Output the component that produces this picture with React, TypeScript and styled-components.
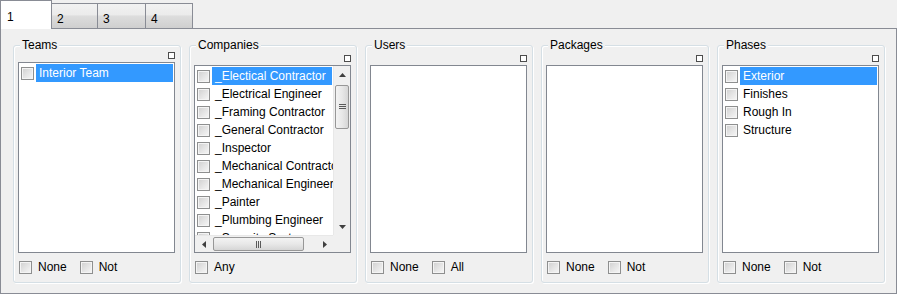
import React from 'react';
import styled, { createGlobalStyle } from 'styled-components';

const border = '#898c95';
const listBorder = '#828790';
const face = '#f0f0f0';
const select = '#3399ff';

type Item = { label: string; selected?: boolean };
type Group = {
  title: string;
  items: Item[];
  scroll?: boolean;
  lift?: number;
  options: string[];
};

const groups: Group[] = [
  {
    title: 'Teams',
    lift: 3,
    items: [{ label: 'Interior Team', selected: true }],
    options: ['None', 'Not'],
  },
  {
    title: 'Companies',
    scroll: true,
    items: [
      { label: '_Electical Contractor', selected: true },
      { label: '_Electrical Engineer' },
      { label: '_Framing Contractor' },
      { label: '_General Contractor' },
      { label: '_Inspector' },
      { label: '_Mechanical Contractor' },
      { label: '_Mechanical Engineer' },
      { label: '_Painter' },
      { label: '_Plumbing Engineer' },
      { label: '_Security Systems' },
    ],
    options: ['Any'],
  },
  { title: 'Users', items: [], options: ['None', 'All'] },
  { title: 'Packages', items: [], options: ['None', 'Not'] },
  {
    title: 'Phases',
    items: [
      { label: 'Exterior', selected: true },
      { label: 'Finishes' },
      { label: 'Rough In' },
      { label: 'Structure' },
    ],
    options: ['None', 'Not'],
  },
];

const tabs = [
  { label: '1', width: 52 },
  { label: '2', width: 47 },
  { label: '3', width: 49 },
  { label: '4', width: 48 },
];

export default function App() {
  return (
    <>
      <GlobalStyle />
      <Window>
        <TabStrip>
          {tabs.map((t, i) => (
            <Tab key={t.label} $active={i === 0} $width={t.width}>
              {t.label}
            </Tab>
          ))}
        </TabStrip>
        <Panel>
          {groups.map((g) => (
            <GroupBox key={g.title}>
              <Legend>{g.title}</Legend>
              <CornerRow $lift={g.lift ?? 0}>
                <CornerSquare />
              </CornerRow>
              <ListBox $scroll={!!g.scroll} $lift={g.lift ?? 0}>
                <Items>
                  {g.items.map((it) => (
                    <Row key={it.label}>
                      <Check />
                      <RowLabel $selected={!!it.selected}>{it.label}</RowLabel>
                    </Row>
                  ))}
                </Items>
                {g.scroll && (
                  <>
                    <VScroll>
                      <Arrow>
                        <svg width="7" height="4" viewBox="0 0 7 4">
                          <polygon points="0,4 7,4 3.5,0" fill="#404040" />
                        </svg>
                      </Arrow>
                      <VTrack>
                        <VThumb>
                          <svg width="7" height="6" viewBox="0 0 7 6">
                            <path d="M0 0.5h7M0 2.5h7M0 4.5h7" stroke="#5a5a5a" />
                          </svg>
                        </VThumb>
                      </VTrack>
                      <Arrow>
                        <svg width="7" height="4" viewBox="0 0 7 4">
                          <polygon points="0,0 7,0 3.5,4" fill="#404040" />
                        </svg>
                      </Arrow>
                    </VScroll>
                    <HScroll>
                      <Arrow>
                        <svg width="4" height="7" viewBox="0 0 4 7">
                          <polygon points="4,0 4,7 0,3.5" fill="#404040" />
                        </svg>
                      </Arrow>
                      <HTrack>
                        <HThumb>
                          <svg width="6" height="7" viewBox="0 0 6 7">
                            <path d="M0.5 0v7M2.5 0v7M4.5 0v7" stroke="#5a5a5a" />
                          </svg>
                        </HThumb>
                      </HTrack>
                      <Arrow>
                        <svg width="4" height="7" viewBox="0 0 4 7">
                          <polygon points="0,0 0,7 4,3.5" fill="#404040" />
                        </svg>
                      </Arrow>
                    </HScroll>
                    <Corner />
                  </>
                )}
              </ListBox>
              <Options>
                {g.options.map((o) => (
                  <Option key={o}>
                    <Check />
                    <span>{o}</span>
                  </Option>
                ))}
              </Options>
            </GroupBox>
          ))}
        </Panel>
      </Window>
    </>
  );
}

const GlobalStyle = createGlobalStyle`
  html, body {
    margin: 0;
    padding: 0;
    background: ${face};
  }
  body {
    font-family: "Liberation Sans", Arial, sans-serif;
    font-size: 12px;
    color: #000;
  }
`;

const Window = styled.div`
  width: 897px;
  height: 294px;
  display: flex;
  flex-direction: column;
  background: ${face};
`;

const TabStrip = styled.div`
  height: 28px;
  display: flex;
  align-items: flex-end;
  position: relative;
  z-index: 1;
`;

const Tab = styled.div<{ $active: boolean; $width: number }>`
  box-sizing: border-box;
  width: ${(p) => p.$width}px;
  height: ${(p) => (p.$active ? 29 : 25)}px;
  margin-left: -1px;
  margin-bottom: ${(p) => (p.$active ? -1 : 0)}px;
  &:first-child {
    margin-left: 0;
  }
  border: 1px solid ${border};
  border-bottom: none;
  padding: ${(p) => (p.$active ? '9px 0 0 6px' : '8px 0 0 5px')};
  line-height: 14px;
  background: ${(p) =>
    p.$active
      ? '#ffffff'
      : 'linear-gradient(#f2f2f2 0%, #ebebeb 45%, #dddddd 50%, #cfcfcf 100%)'};
  z-index: ${(p) => (p.$active ? 2 : 1)};
  position: relative;
`;

const Panel = styled.div`
  box-sizing: border-box;
  height: 266px;
  border: 1px solid ${border};
  background: ${face};
  display: flex;
  gap: 8px;
  padding: 16px 0 0 12px;
`;

const GroupBox = styled.div`
  box-sizing: border-box;
  width: 168px;
  height: 238px;
  border: 1px solid #d5dfe5;
  border-radius: 3px;
  box-shadow: inset 1px 1px 0 #fff, 1px 1px 0 #fff;
  display: flex;
  flex-direction: column;
  padding: 0 5px 0 4px;
`;

const Legend = styled.div`
  align-self: flex-start;
  margin: -8px 0 0 2px;
  padding: 0 2px;
  height: 14px;
  line-height: 14px;
  background: ${face};
`;

const CornerRow = styled.div<{ $lift: number }>`
  display: flex;
  justify-content: flex-end;
  margin-top: ${(p) => 3 - p.$lift}px;
`;

const CornerSquare = styled.div`
  box-sizing: border-box;
  width: 7px;
  height: 7px;
  border: 1px solid #4d4d4d;
  background: #fff;
`;

const ListBox = styled.div<{ $scroll: boolean; $lift: number }>`
  box-sizing: border-box;
  margin-top: 3px;
  height: ${(p) => 188 + p.$lift}px;
  border: 1px solid ${listBorder};
  background: #fff;
  display: grid;
  grid-template-columns: ${(p) => (p.$scroll ? '1fr 17px' : '1fr')};
  grid-template-rows: ${(p) => (p.$scroll ? '1fr 17px' : '1fr')};
  overflow: hidden;
`;

const Items = styled.div`
  overflow: hidden;
  padding: 1px 1px 0 2px;
  min-width: 0;
`;

const Row = styled.div`
  height: 18px;
  display: flex;
  align-items: center;
  white-space: nowrap;
`;

const RowLabel = styled.div<{ $selected: boolean }>`
  flex: 1;
  height: 18px;
  line-height: 18px;
  margin-left: 2px;
  padding-left: 3px;
  background: ${(p) => (p.$selected ? select : 'transparent')};
  color: ${(p) => (p.$selected ? '#fff' : '#000')};
`;

const Check = styled.span`
  box-sizing: border-box;
  display: inline-block;
  flex: none;
  width: 13px;
  height: 13px;
  border: 1px solid #8e8f8f;
  box-shadow: inset 0 0 0 1px #f4f4f4;
  background: linear-gradient(135deg, #cfcfcf 0%, #e4e4e4 50%, #f7f7f7 100%);
`;

const VScroll = styled.div`
  display: flex;
  flex-direction: column;
  background: #f0f0f0;
  border-left: 1px solid #e8e8e8;
`;

const HScroll = styled.div`
  display: flex;
  background: #f0f0f0;
  border-top: 1px solid #e8e8e8;
`;

const Arrow = styled.div`
  flex: none;
  width: 17px;
  height: 17px;
  display: flex;
  align-items: center;
  justify-content: center;
`;

const VTrack = styled.div`
  flex: 1;
  padding: 2px 0 0 0;
`;

const VThumb = styled.div`
  box-sizing: border-box;
  margin: 0 1px;
  height: 44px;
  border: 1px solid #979797;
  border-radius: 2px;
  background: linear-gradient(90deg, #f3f3f3 0%, #e8e8e8 50%, #d6d6d6 100%);
  display: flex;
  align-items: center;
  justify-content: center;
`;

const HTrack = styled.div`
  flex: 1;
  display: flex;
  padding-left: 1px;
`;

const HThumb = styled.div`
  box-sizing: border-box;
  margin: 1px 0;
  width: 91px;
  border: 1px solid #979797;
  border-radius: 2px;
  background: linear-gradient(#f3f3f3 0%, #e8e8e8 50%, #d6d6d6 100%);
  display: flex;
  align-items: center;
  justify-content: center;
`;

const Corner = styled.div`
  background: #f0f0f0;
`;

const Options = styled.div`
  margin-top: 8px;
  display: flex;
  gap: 13px;
  padding-left: 1px;
`;

const Option = styled.label`
  display: flex;
  align-items: center;
  gap: 6px;
  height: 13px;
  line-height: 13px;
`;
